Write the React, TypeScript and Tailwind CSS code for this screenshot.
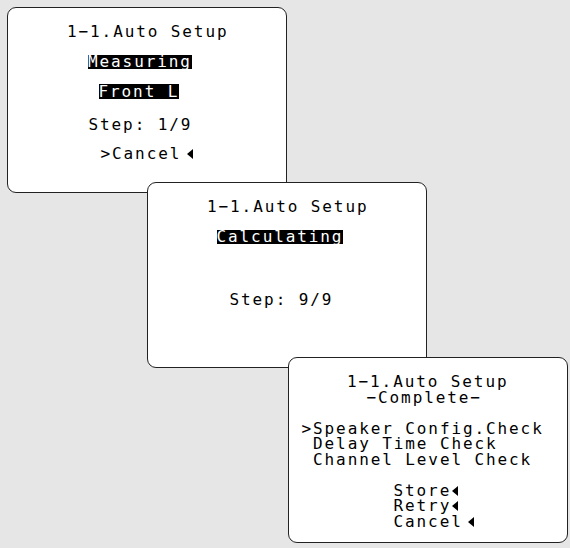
const mono = "font-['DejaVu_Sans_Mono',monospace] text-[16px] tracking-[1.9px] text-black";

function Tri({ className = "" }: { className?: string }) {
  return (
    <svg width="6" height="10" viewBox="0 0 6 10" className={`inline-block align-baseline ${className}`}>
      <polygon points="6,0 6,10 0,5" fill="#000" />
    </svg>
  );
}

function Screen({ className, children }: { className: string; children: React.ReactNode }) {
  return (
    <div
      className={`absolute h-[186px] w-[280px] rounded-[9px] border-[1.5px] border-[#222] bg-white ${mono} ${className}`}
    >
      {children}
    </div>
  );
}

export default function App() {
  return (
    <div className="relative h-[548px] w-[570px] overflow-hidden bg-[#e6e6e6]">
      {/* step 1: measuring */}
      <Screen className="left-[7px] top-[7px]">
        <div className="ml-[59px] mt-[15.5px] leading-[15.5px] whitespace-pre">1−1.Auto Setup</div>
        <div className="ml-[80px] mt-[16px] leading-[14px]">
          <span className="inline-block bg-black text-white">Measuring</span>
        </div>
        <div className="ml-[90.5px] mt-[15px] leading-[15px]">
          <span className="inline-block bg-black text-white whitespace-pre">Front L</span>
        </div>
        <div className="ml-[80.5px] mt-[17.5px] leading-[15.5px] whitespace-pre">Step: 1/9</div>
        <div className="ml-[92.5px] mt-[13.5px] leading-[15.5px]">
          &gt;Cancel
          <Tri className="ml-[6px]" />
        </div>
      </Screen>

      {/* step 2: calculating */}
      <Screen className="left-[147px] top-[182px]">
        <div className="ml-[59px] mt-[15.5px] leading-[15.5px] whitespace-pre">1−1.Auto Setup</div>
        <div className="ml-[68.5px] mt-[16px] leading-[14px]">
          <span className="inline-block bg-black text-white">Calculating</span>
        </div>
        <div className="ml-[81.5px] mt-[47.5px] leading-[15.5px] whitespace-pre">Step: 9/9</div>
      </Screen>

      {/* step 3: complete */}
      <Screen className="left-[288px] top-[357px]">
        <div className="flex flex-col pt-[16px] leading-[15.5px] whitespace-pre">
          <div className="ml-[58px]">1−1.Auto Setup</div>
          <div className="ml-[77.5px]">−Complete−</div>
          <div className="h-[15.5px]" />
          <div className="ml-[12.5px]">&gt;Speaker Config.Check</div>
          <div className="ml-[12.5px]"> Delay Time Check</div>
          <div className="ml-[12.5px]"> Channel Level Check</div>
          <div className="h-[15.5px]" />
          <div className="ml-[104.5px]">
            Store
            <Tri className="ml-[1px]" />
          </div>
          <div className="ml-[104.5px]">
            Retry
            <Tri className="ml-[1px]" />
          </div>
          <div className="ml-[104.5px]">
            Cancel
            <Tri className="ml-[5px]" />
          </div>
        </div>
      </Screen>
    </div>
  );
}
